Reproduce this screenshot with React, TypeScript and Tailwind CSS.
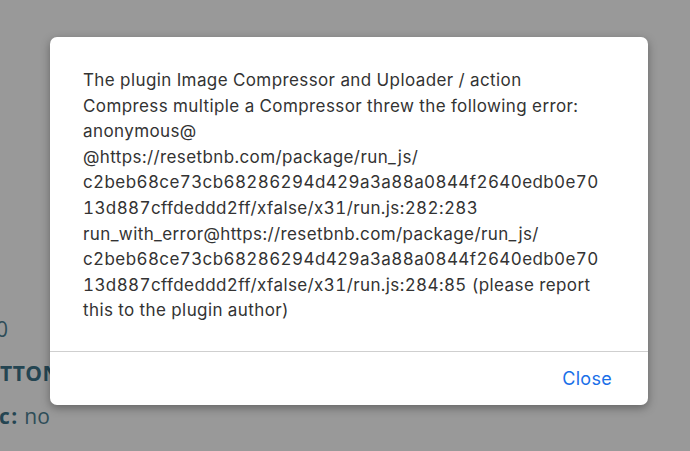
const lines = [
  "The plugin Image Compressor and Uploader / action",
  "Compress multiple a Compressor threw the following error:",
  "anonymous@",
  "@https://resetbnb.com/package/run_js/",
  "c2beb68ce73cb68286294d429a3a88a0844f2640edb0e70",
  "13d887cffdeddd2ff/xfalse/x31/run.js:282:283",
  "run_with_error@https://resetbnb.com/package/run_js/",
  "c2beb68ce73cb68286294d429a3a88a0844f2640edb0e70",
  "13d887cffdeddd2ff/xfalse/x31/run.js:284:85 (please report",
  "this to the plugin author)",
];

export default function App() {
  return (
    <div className="relative h-[451px] w-[690px] overflow-hidden bg-[#999999] font-['Inter',sans-serif]">
      {/* page behind the overlay */}
      <div className="flex flex-col pt-[315px] font-['Open_Sans',sans-serif] text-[21px] text-[#2e4d58]">
        <p className="-ml-[4px] h-[44px] leading-[28px]">0</p>
        <p className="-ml-[31px] h-[43px] font-bold leading-[28px] tracking-[0.5px] text-[#244552]">
          BUTTON
        </p>
        <p className="-ml-[1px] leading-[28px]">
          <span className="font-bold tracking-[1.5px] text-[#244552]">c:</span> no
        </p>
      </div>

      <div className="absolute left-[50px] top-[37px] w-[598px] overflow-hidden rounded-[7px] bg-white shadow-[0_3px_10px_rgba(0,0,0,0.35)]">
        <div className="px-[33px] pt-[31px] pb-[27px] text-[17px] leading-[25.6px] tracking-[0.4px] tabular-nums text-[#333333]">
          {lines.map((l, i) => (
            <div key={i} className="whitespace-nowrap">
              {l}
            </div>
          ))}
        </div>
        <div className="flex h-[54px] items-center justify-end border-t border-[#cfcfcf] px-[36px]">
          <button className="text-[18px] tracking-[0.3px] text-[#1a6fe8]">Close</button>
        </div>
      </div>
    </div>
  );
}
